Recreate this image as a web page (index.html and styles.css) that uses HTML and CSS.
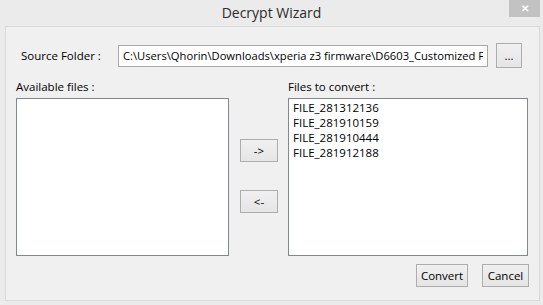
FILE: index.html
```html
<!DOCTYPE html>
<html>
    <head>
        <meta http-equiv="Content-Type" content="text/html; charset=utf-8"/>
        <title>Decrypt Wizard</title>
        <link rel="stylesheet" href="styles.css">
    </head>
    <body>
        <div class="titlebar">
            <span class="title">Decrypt Wizard</span>
            <span class="close">&#x2715;</span>
        </div>
        <div class="client">
            <div class="source">
                <label for="folder">Source Folder :</label>
                <input type="text" id="folder" value="C:\Users\Qhorin\Downloads\xperia z3 firmware\D6603_Customized FR_1288-2034_23.0.1.A.5.77_R6A">
                <button class="browse">...</button>
            </div>
            <div class="lists">
                <div class="col">
                    <div class="caption">Available files :</div>
                    <div class="listbox left"></div>
                </div>
                <div class="moves">
                    <button class="move">-&gt;</button>
                    <button class="move">&lt;-</button>
                </div>
                <div class="col">
                    <div class="caption">Files to convert :</div>
                    <div class="listbox right">
                        <div>FILE_281312136</div>
                        <div>FILE_281910159</div>
                        <div>FILE_281910444</div>
                        <div>FILE_281912188</div>
                    </div>
                </div>
            </div>
            <div class="actions">
                <button class="convert">Convert</button>
                <button class="cancel">Cancel</button>
            </div>
        </div>
    </body>
</html>
```

FILE: styles.css
```css
body {
    margin: 0;
    width: 543px;
    height: 305px;
    background-color: #ebebeb;
    font-family: "Open Sans", "Noto Sans", sans-serif;
    font-size: 11.5px;
    color: #000;
    overflow: hidden;
}
.titlebar {
    position: relative;
    height: 26px;
    text-align: center;
}
.title {
    display: inline-block;
    font-size: 14px;
    line-height: 26px;
    color: #2b2b2b;
}
.close {
    position: absolute;
    top: 0;
    left: 509px;
    width: 31px;
    height: 17px;
    background-color: #c2c2c2;
    color: #fff;
    font-size: 10px;
    font-weight: bold;
    line-height: 17px;
    text-align: center;
}
.client {
    margin-left: 5px;
    width: 535px;
    height: 275px;
    border: 1px solid #d9d9d9;
    background-color: #f0f0f0;
    padding: 16px 10px 0 10px;
    box-sizing: border-box;
}
.source {
    display: flex;
    align-items: center;
    height: 25px;
    margin-right: 6px;
}
.source label {
    width: 102px;
    padding-left: 5px;
    box-sizing: border-box;
}
.source input {
    width: 370px;
    height: 22px;
    box-sizing: border-box;
    margin: 0;
    border: 1px solid #a9a9a9;
    padding: 0 4px;
    font-family: inherit;
    font-size: 11.2px;
    color: #000;
    background: #fff;
}
button {
    font-family: inherit;
    font-size: 11.5px;
    color: #000;
    background: linear-gradient(#f0f0f0, #e5e5e5);
    border: 1px solid #adadad;
    margin: 0;
    padding: 0;
    box-sizing: border-box;
}
.browse {
    width: 26px;
    height: 25px;
    margin-left: 8px;
}
.lists {
    display: flex;
    margin-top: 11px;
}
.caption {
    height: 19px;
    line-height: 15px;
}
.listbox {
    height: 158px;
    box-sizing: border-box;
    border: 1px solid #828790;
    background: #fff;
    padding: 1px 4px;
    line-height: 15px;
}
.left {
    width: 213px;
}
.right {
    width: 240px;
}
.moves {
    display: flex;
    flex-direction: column;
    gap: 28px;
    padding-top: 60px;
    margin: 0 10px 0 11px;
}
.move {
    width: 38px;
    height: 23px;
}
.actions {
    display: flex;
    justify-content: flex-end;
    gap: 14px;
    margin-top: 8px;
}
.convert {
    width: 52px;
    height: 23px;
}
.cancel {
    width: 47px;
    height: 23px;
}
```
